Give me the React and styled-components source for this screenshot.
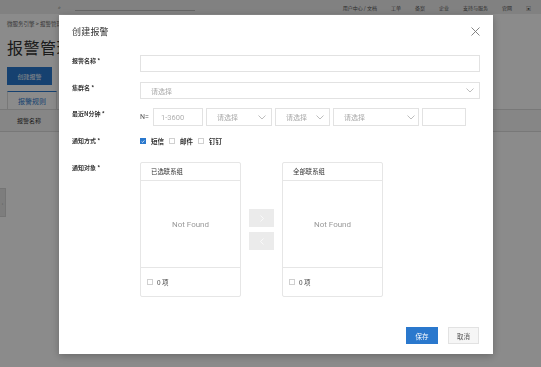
import React from "react";
import styled, { createGlobalStyle } from "styled-components";

const Global = createGlobalStyle`
  html, body { margin: 0; padding: 0; }
  body {
    font-family: "Noto Sans CJK SC", "Noto Sans", sans-serif;
    background: #fff;
    width: 541px;
    height: 367px;
    overflow: hidden;
  }
`;

const Page = styled.div`
  position: relative;
  width: 541px;
  height: 367px;
  overflow: hidden;
  background: #fff;
`;

const TopBar = styled.div`
  height: 14px;
  background: #ececec;
  display: flex;
  align-items: center;
  padding: 0 10px 0 58px;
  gap: 14px;
  font-size: 5px;
  color: #555;
  box-sizing: border-box;
`;

const SearchBox = styled.div`
  width: 120px;
  height: 6px;
  border-bottom: 1px solid #bbb;
`;

const NavSpacer = styled.div`
  flex: 1;
`;

const NavItem = styled.span`
  white-space: nowrap;
`;

const Main = styled.div`
  padding: 0 7px;
`;

const Breadcrumb = styled.div`
  margin-top: 7px;
  font-size: 5.5px;
  line-height: 6px;
  color: #666;
`;

const PageTitle = styled.div`
  margin-top: 11px;
  font-size: 16px;
  line-height: 18px;
  color: #333;
  letter-spacing: 0.5px;
`;

const PrimaryBtn = styled.div`
  margin-top: 11px;
  width: 45px;
  height: 18px;
  background: #2a78cd;
  color: #fff;
  font-size: 6px;
  display: flex;
  align-items: center;
  justify-content: center;
`;

const Tab = styled.div`
  margin-top: 6px;
  width: 48px;
  height: 17px;
  border: 1px solid #ddd;
  border-top: 1px solid #2a78cd;
  border-bottom: none;
  color: #2a78cd;
  font-size: 7px;
  display: flex;
  align-items: center;
  justify-content: center;
  background: #fff;
`;

const TableHead = styled.div`
  margin: 0 -7px;
  height: 23px;
  border-top: 1px solid #ddd;
  border-bottom: 1px solid #ddd;
  background: #f6f6f6;
  display: flex;
  align-items: center;
  padding-left: 17px;
  font-size: 6px;
  color: #333;
  box-sizing: border-box;
`;

const Handle = styled.div`
  position: absolute;
  left: 0;
  top: 188px;
  width: 5px;
  height: 27px;
  background: #e6e6e6;
  border: 1px solid #d6d6d6;
  border-left: none;
  font-size: 5px;
  color: #999;
  display: flex;
  align-items: center;
  justify-content: center;
`;

const Overlay = styled.div`
  position: fixed;
  inset: 0;
  background: rgba(0, 0, 0, 0.455);
  padding: 15px 0 0 59px;
  box-sizing: border-box;
`;

const Modal = styled.div`
  width: 434px;
  height: 339px;
  background: #fff;
  box-shadow: 0 2px 8px rgba(0, 0, 0, 0.25);
  display: flex;
  flex-direction: column;
  box-sizing: border-box;
`;

const ModalHeader = styled.div`
  height: 32px;
  padding: 0 13px;
  display: flex;
  align-items: center;
  justify-content: space-between;
`;

const ModalTitle = styled.div`
  font-size: 9px;
  color: #333;
  letter-spacing: 0.2px;
`;

const CloseBtn = styled.svg`
  width: 9px;
  height: 9px;
  display: block;
`;

const Form = styled.div`
  padding: 8px 13px 0;
  display: flex;
  flex-direction: column;
`;

const Row = styled.div`
  display: flex;
  align-items: flex-start;
  margin-bottom: ${(p) => p.$gap || 0}px;
`;

const Label = styled.div`
  width: 68px;
  flex: none;
  font-size: 6px;
  line-height: 12px;
  font-weight: 700;
  color: #333;
  white-space: nowrap;
`;

const Controls = styled.div`
  flex: 1;
  display: flex;
  align-items: center;
  gap: ${(p) => p.$gap || 0}px;
  height: ${(p) => (p.$h ? p.$h + "px" : "auto")};
`;

const TextInput = styled.div`
  width: ${(p) => (p.$w ? p.$w + "px" : "auto")};
  flex: ${(p) => (p.$w ? "none" : "1")};
  height: ${(p) => p.$h || 17}px;
  border: 1px solid #e2e2e2;
  box-sizing: border-box;
  font-family: Roboto, "Noto Sans CJK SC", sans-serif;
  font-size: 7.5px;
  color: #b0b0b0;
  display: flex;
  align-items: center;
  padding-left: ${(p) => p.$pl || 7}px;
`;

const SelectBox = styled.div`
  width: ${(p) => (p.$w ? p.$w + "px" : "auto")};
  flex: ${(p) => (p.$w ? "none" : "1")};
  height: ${(p) => p.$h || 17}px;
  border: 1px solid #e2e2e2;
  box-sizing: border-box;
  display: flex;
  align-items: center;
  justify-content: space-between;
  padding: 0 ${(p) => p.$pr || 6}px 0 10px;
  font-size: 7px;
  color: #a8a8a8;
`;

const Prefix = styled.span`
  width: 10px;
  flex: none;
  font-family: Roboto, sans-serif;
  font-size: 7px;
  color: #555;
`;

const Check = styled.span`
  width: 6px;
  height: 6px;
  box-sizing: border-box;
  border: 1px solid ${(p) => (p.$on ? "#2a78cd" : "#d0d0d0")};
  background: ${(p) => (p.$on ? "#2a78cd" : "#fff")};
  display: inline-flex;
  align-items: center;
  justify-content: center;
  flex: none;
`;

const CheckItem = styled.label`
  display: flex;
  align-items: center;
  gap: 5px;
  margin-right: 5px;
  font-size: 6.5px;
  font-weight: 700;
  color: #333;
`;

const Transfer = styled.div`
  display: flex;
  align-items: center;
`;

const Panel = styled.div`
  width: 101px;
  height: 135px;
  border: 1px solid #e6e6e6;
  border-radius: 2px;
  box-sizing: border-box;
  display: flex;
  flex-direction: column;
`;

const PanelHead = styled.div`
  height: 17px;
  border-bottom: 1px solid #e6e6e6;
  padding-left: 10px;
  font-size: 6.4px;
  color: #333;
  display: flex;
  align-items: center;
  flex: none;
`;

const PanelBody = styled.div`
  flex: 1;
  display: flex;
  align-items: center;
  justify-content: center;
  font-family: Roboto, sans-serif;
  font-size: 8px;
  color: #999;
`;

const PanelFoot = styled.div`
  height: 28px;
  border-top: 1px solid #e6e6e6;
  padding-left: 6px;
  display: flex;
  align-items: center;
  gap: 4px;
  font-size: 6.5px;
  color: #444;
  flex: none;
`;

const Arrows = styled.div`
  margin: 0 8px 0 8px;
  display: flex;
  flex-direction: column;
  gap: 5px;
`;

const ArrowBtn = styled.div`
  width: 25px;
  height: 18px;
  background: #ebebeb;
  display: flex;
  align-items: center;
  justify-content: center;
`;

const Footer = styled.div`
  margin-top: auto;
  padding: 0 14px 10px;
  display: flex;
  justify-content: flex-end;
  gap: 10px;
`;

const Button = styled.div`
  width: ${(p) => p.$w}px;
  height: 17px;
  box-sizing: border-box;
  background: ${(p) => (p.$primary ? "#2a78cd" : "#f6f6f6")};
  border: 1px solid ${(p) => (p.$primary ? "#2a78cd" : "#e2e2e2")};
  color: ${(p) => (p.$primary ? "#fff" : "#555")};
  font-size: 6.5px;
  display: flex;
  align-items: center;
  justify-content: center;
`;

const Chevron = () => (
  <svg width="8" height="5" viewBox="0 0 8 5">
    <polyline points="0.5,0.5 4,4 7.5,0.5" fill="none" stroke="#b5b5b5" strokeWidth="0.9" />
  </svg>
);

const Tick = () => (
  <svg width="5" height="5" viewBox="0 0 5 5">
    <polyline points="0.8,2.6 2,3.7 4.2,1.2" fill="none" stroke="#fff" strokeWidth="0.9" />
  </svg>
);

const Arrow = ({ left }) => (
  <svg width="4" height="7" viewBox="0 0 4 7">
    <polyline
      points={left ? "3.5,0.5 0.5,3.5 3.5,6.5" : "0.5,0.5 3.5,3.5 0.5,6.5"}
      fill="none"
      stroke="#fafafa"
      strokeWidth="0.9"
    />
  </svg>
);

function TransferPanel({ title }) {
  return (
    <Panel>
      <PanelHead>{title}</PanelHead>
      <PanelBody>Not Found</PanelBody>
      <PanelFoot>
        <Check />
        <span>0 项</span>
      </PanelFoot>
    </Panel>
  );
}

export default function App() {
  return (
    <Page>
      <Global />
      <TopBar>
        <NavItem>⌕</NavItem>
        <SearchBox />
        <NavSpacer />
        <NavItem>用户中心 / 文档</NavItem>
        <NavItem>工单</NavItem>
        <NavItem>备案</NavItem>
        <NavItem>企业</NavItem>
        <NavItem>支持与服务</NavItem>
        <NavItem>官网</NavItem>
        <NavItem>▣</NavItem>
      </TopBar>
      <Main>
        <Breadcrumb>微服务引擎 &gt; 报警管理</Breadcrumb>
        <PageTitle>报警管理</PageTitle>
        <PrimaryBtn>创建报警</PrimaryBtn>
        <Tab>报警规则</Tab>
        <TableHead>报警名称</TableHead>
      </Main>
      <Handle>‹</Handle>

      <Overlay>
        <Modal>
          <ModalHeader>
            <ModalTitle>创建报警</ModalTitle>
            <CloseBtn viewBox="0 0 9 9">
              <line x1="0.5" y1="0.5" x2="8.5" y2="8.5" stroke="#777" strokeWidth="0.9" />
              <line x1="8.5" y1="0.5" x2="0.5" y2="8.5" stroke="#777" strokeWidth="0.9" />
            </CloseBtn>
          </ModalHeader>
          <Form>
            <Row $gap={10}>
              <Label>报警名称 *</Label>
              <Controls>
                <TextInput />
              </Controls>
            </Row>
            <Row $gap={9}>
              <Label>集群名 *</Label>
              <Controls>
                <SelectBox $pr={5}>
                  <span>请选择</span>
                  <Chevron />
                </SelectBox>
              </Controls>
            </Row>
            <Row $gap={9}>
              <Label>最近N分钟 *</Label>
              <Controls $gap={3} $h={18}>
                <Prefix>N=</Prefix>
                <TextInput $w={50} $h={18}>1-3600</TextInput>
                <SelectBox $w={66} $h={18} $pr={5}>
                  <span>请选择</span>
                  <Chevron />
                </SelectBox>
                <SelectBox $w={55} $h={18} $pr={5}>
                  <span>请选择</span>
                  <Chevron />
                </SelectBox>
                <SelectBox $w={86} $h={18} $pr={3}>
                  <span>请选择</span>
                  <Chevron />
                </SelectBox>
                <TextInput $w={44} $h={18} />
              </Controls>
            </Row>
            <Row $gap={15}>
              <Label>通知方式 *</Label>
              <Controls $h={12}>
                <CheckItem>
                  <Check $on>
                    <Tick />
                  </Check>
                  短信
                </CheckItem>
                <CheckItem>
                  <Check />
                  邮件
                </CheckItem>
                <CheckItem>
                  <Check />
                  钉钉
                </CheckItem>
              </Controls>
            </Row>
            <Row>
              <Label>通知对象 *</Label>
              <Transfer>
                <TransferPanel title="已选联系组" />
                <Arrows>
                  <ArrowBtn>
                    <Arrow />
                  </ArrowBtn>
                  <ArrowBtn>
                    <Arrow left />
                  </ArrowBtn>
                </Arrows>
                <TransferPanel title="全部联系组" />
              </Transfer>
            </Row>
          </Form>
          <Footer>
            <Button $primary $w={32}>保存</Button>
            <Button $w={31}>取消</Button>
          </Footer>
        </Modal>
      </Overlay>
    </Page>
  );
}
